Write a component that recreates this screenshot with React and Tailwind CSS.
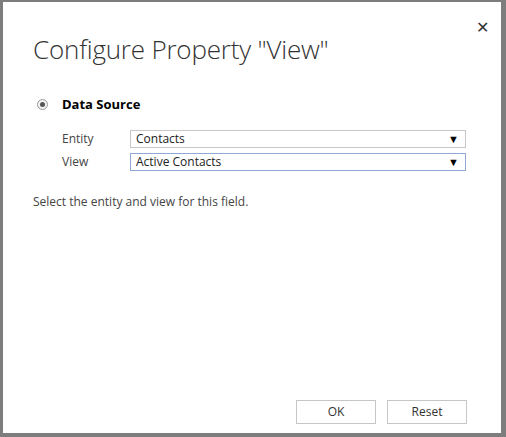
import React from 'react';

const font = { fontFamily: '"Open Sans", "Noto Sans", sans-serif' };

const SelectBox = ({ value, active }) => (
  <div
    className={`flex h-[18px] w-[336px] items-center justify-between border pl-[5px] pr-[6px] text-[12px] text-[#222] ${
      active ? 'border-[#8fa8d6]' : 'border-[#c6c6c6]'
    }`}
  >
    <span className="leading-none">{value}</span>
    <span className="text-[11px] leading-none text-black">▼</span>
  </div>
);

const App = () => {
  return (
    <div className="h-[437px] w-[506px] bg-[#7d7d7d] pl-[3px] pt-[2px]" style={font}>
      <div className="flex h-[431px] w-[498px] flex-col bg-white">
        {/* Header */}
        <div className="flex justify-end pr-[12px] pt-[17px]">
          <button className="text-[16px] leading-none text-[#333]">✕</button>
        </div>
        <h1 className="ml-[30px] mt-[1px] text-[26px] font-light leading-none tracking-[-0.2px] text-[#333]">
          Configure Property "View"
        </h1>

        {/* Data source */}
        <div className="ml-[34px] mt-[33px] flex items-center gap-[14px]">
          <span className="flex h-[11px] w-[11px] items-center justify-center rounded-full border border-[#9a9a9a] bg-[#f2f2f2]">
            <span className="h-[5px] w-[5px] rounded-full bg-[#555]" />
          </span>
          <span className="text-[13px] font-bold text-black">Data Source</span>
        </div>

        <div className="ml-[59px] mt-[15px] flex flex-col gap-[5px]">
          <div className="flex items-center">
            <span className="w-[68px] text-[12px] text-[#444]">Entity</span>
            <SelectBox value="Contacts" />
          </div>
          <div className="flex items-center">
            <span className="w-[68px] text-[12px] text-[#444]">View</span>
            <SelectBox value="Active Contacts" active />
          </div>
        </div>

        <p className="ml-[30px] mt-[22px] text-[12px] text-[#444]">
          Select the entity and view for this field.
        </p>

        {/* Footer */}
        <div className="mt-auto flex justify-end gap-[11px] pb-[9px] pr-[34px]">
          <button className="h-[24px] w-[80px] border border-[#c6c6c6] text-[12px] text-[#333]">OK</button>
          <button className="h-[24px] w-[80px] border border-[#c6c6c6] text-[12px] text-[#333]">Reset</button>
        </div>
      </div>
    </div>
  );
};

export default App;
